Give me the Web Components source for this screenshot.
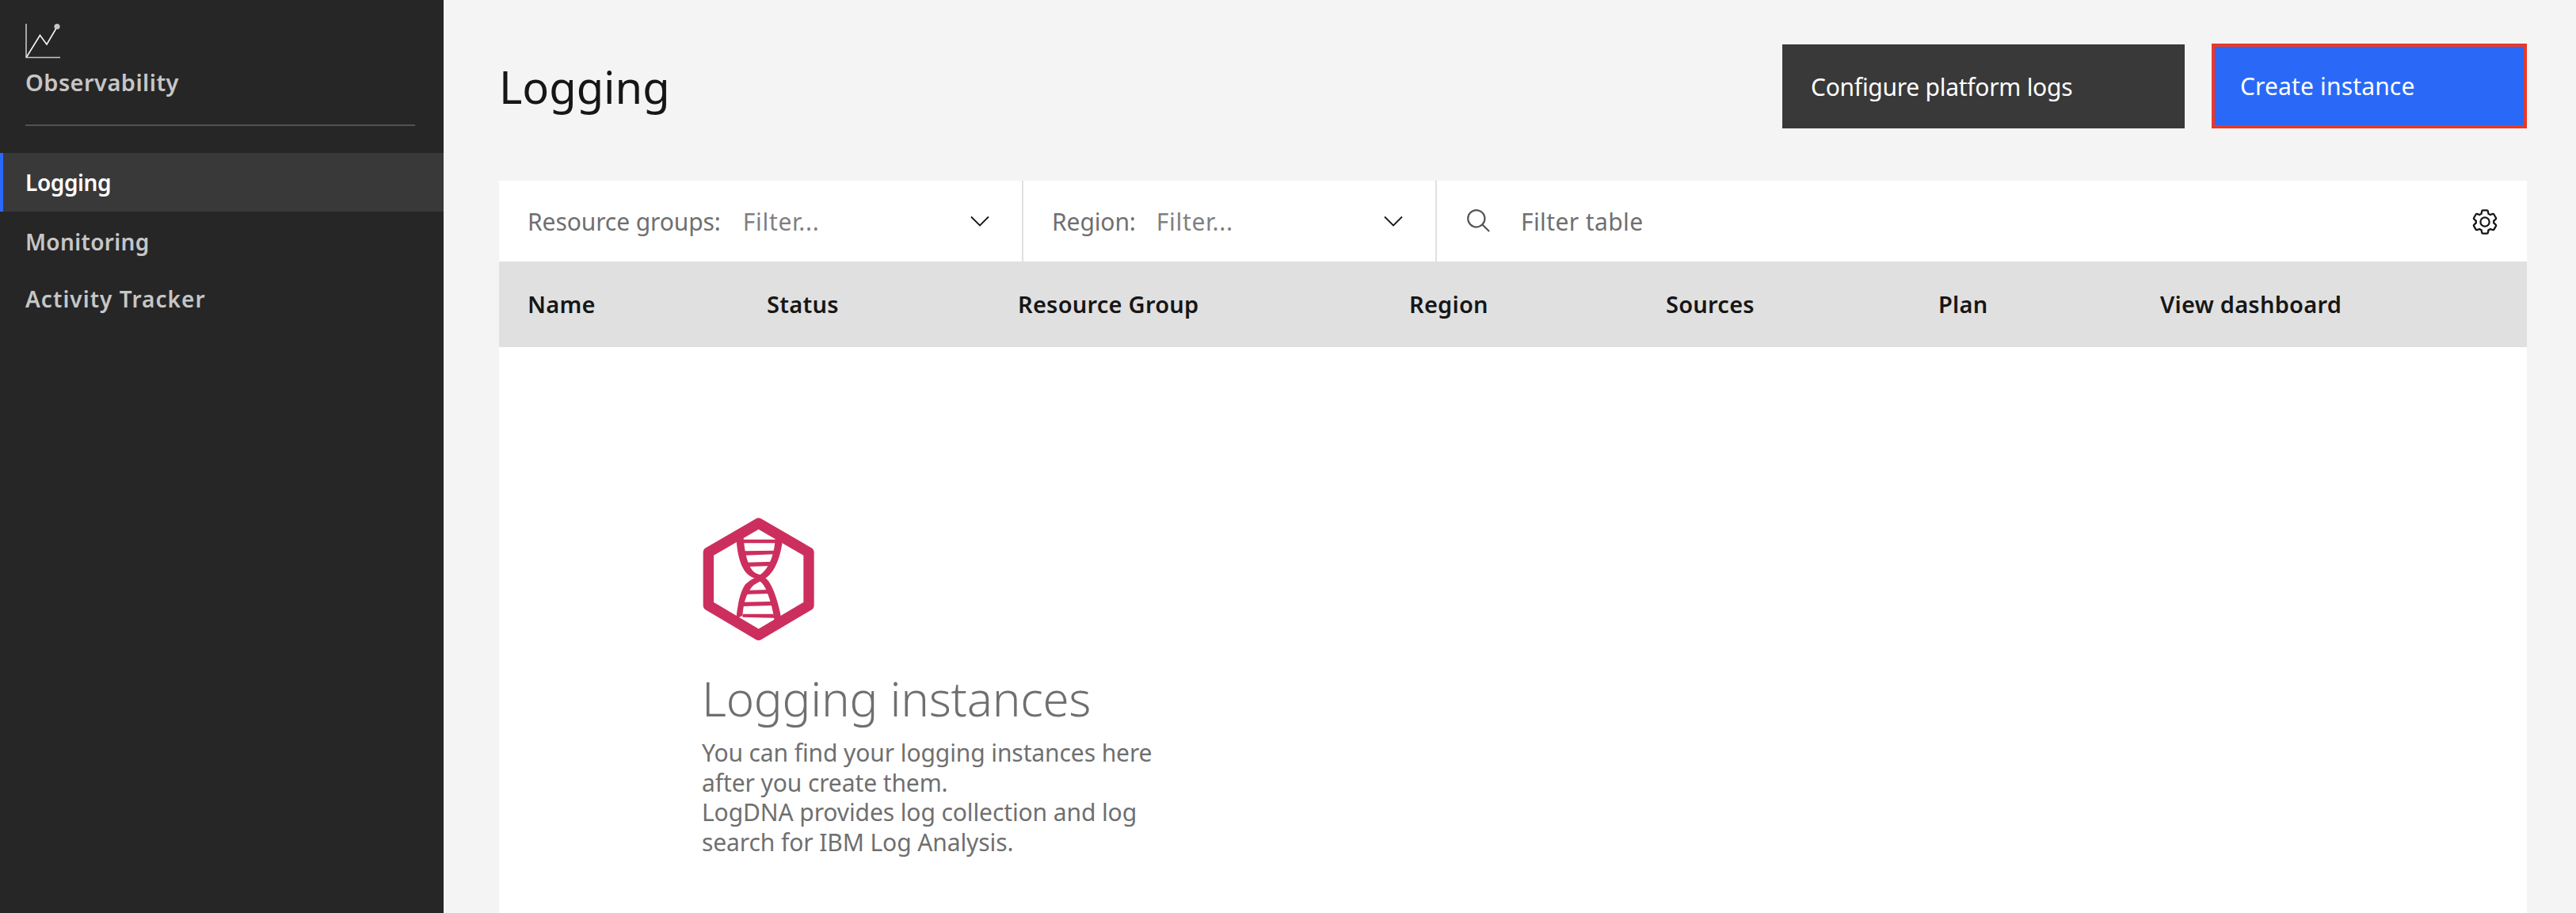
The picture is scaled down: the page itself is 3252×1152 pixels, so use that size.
<!DOCTYPE html>
<html lang="en">
<head>
<meta charset="utf-8">
<title>Logging</title>
<style>
	html, body {
		margin: 0;
		height: 100%;
		background: #f4f4f4;
		font-family: "Noto Sans", "Open Sans", sans-serif;
	}
	body { overflow: hidden; }
</style>
</head>
<body>
	<obs-shell>
		<side-nav slot="nav" heading="Observability">
			<nav-item active style="--ls: -0.4px">Logging</nav-item>
			<nav-item>Monitoring</nav-item>
			<nav-item style="--ls: 1.05px">Activity Tracker</nav-item>
		</side-nav>
		<page-header heading="Logging">
			<action-button style="--ls: -0.27px">Configure platform logs</action-button>
			<action-button kind="primary" style="--ls: 0.15px">Create instance</action-button>
		</page-header>
		<filter-bar>
			<filter-select label="Resource groups:" style="width: 662px"></filter-select>
			<filter-select label="Region:" style="width: 522px" gap="26"></filter-select>
			<table-search></table-search>
		</filter-bar>
		<table-head></table-head>
		<empty-state heading="Logging instances">
			You can find your logging instances here<br>after you create them.<br>LogDNA provides log collection and log<br>search for IBM Log Analysis.
		</empty-state>
	</obs-shell>

<script>
class ObsShell extends HTMLElement {
	constructor() {
		super();
		this.attachShadow({ mode: 'open' });
	}

	connectedCallback() {
		this.shadowRoot.innerHTML = `
			<style>
				:host {
					display: flex;
					height: 100vh;
					overflow: hidden;
				}
				main {
					flex: 1;
					display: flex;
					flex-direction: column;
					padding: 55px 62px 0 70px;
					min-width: 0;
				}
			</style>
			<slot name="nav"></slot>
			<main><slot></slot></main>
		`;
	}
}

class SideNav extends HTMLElement {
	constructor() {
		super();
		this.attachShadow({ mode: 'open' });
	}

	connectedCallback() {
		this.shadowRoot.innerHTML = `
			<style>
				:host {
					display: block;
					width: 560px;
					flex: none;
					background: #262626;
					color: #c6c6c6;
					box-sizing: border-box;
					padding-top: 29px;
				}
				svg { display: block; margin-left: 32px; }
				h2 {
					margin: 11px 0 0 32px;
					font: 600 29px/36px "Noto Sans", sans-serif;
					letter-spacing: 0.45px;
				}
				hr {
					margin: 35px 36px 34px 32px;
					border: 0;
					height: 2px;
					background: #525252;
				}
			</style>
			<svg width="46" height="46" viewBox="32 29 46 46" fill="none">
				<path d="M33 30V72.5H76" stroke="#c6c6c6" stroke-width="1.6"/>
				<path d="M33.5 72L50.5 44.5L59 56L72 34" stroke="#f4f4f4" stroke-width="1.6"/>
				<circle cx="72" cy="33.5" r="3.6" fill="#c6c6c6"/>
			</svg>
			<h2>${this.getAttribute('heading')}</h2>
			<hr>
			<slot></slot>
		`;
	}
}

class NavItem extends HTMLElement {
	constructor() {
		super();
		this.attachShadow({ mode: 'open' });
	}

	connectedCallback() {
		this.shadowRoot.innerHTML = `
			<style>
				:host {
					display: block;
					height: 72px;
					line-height: 72px;
					padding-left: 32px;
					font-size: 28px;
					font-weight: 600;
					letter-spacing: var(--ls, 0.35px);
				}
				:host([active]) {
					height: 74px;
					line-height: 74px;
					margin-bottom: 2px;
					padding-left: 28px;
					border-left: 4px solid #2a69f8;
					background: #393939;
					color: #fff;
				}
			</style>
			<slot></slot>
		`;
	}
}

class PageHeader extends HTMLElement {
	constructor() {
		super();
		this.attachShadow({ mode: 'open' });
	}

	connectedCallback() {
		this.shadowRoot.innerHTML = `
			<style>
				:host {
					display: flex;
					align-items: center;
					gap: 34px;
					height: 107px;
					margin-bottom: 66px;
				}
				h1 {
					flex: 1;
					margin: 0;
					font: 400 56px/76px "Noto Sans", sans-serif;
					color: #161616;
				}
			</style>
			<h1>${this.getAttribute('heading')}</h1>
			<slot></slot>
		`;
	}
}

class ActionButton extends HTMLElement {
	constructor() {
		super();
		this.attachShadow({ mode: 'open' });
	}

	connectedCallback() {
		this.shadowRoot.innerHTML = `
			<style>
				:host {
					display: flex;
					align-items: center;
					box-sizing: border-box;
					width: 508px;
					height: 106px;
					margin-top: 1px;
					padding-left: 36px;
					background: #393939;
					color: #fff;
					font-size: 30px;
					letter-spacing: var(--ls, 0);
				}
				:host([kind="primary"]) {
					width: 398px;
					height: 107px;
					margin-top: 0;
					padding-left: 32px;
					border: 4px solid #e8392a;
					background: #2a69f8;
				}
			</style>
			<slot></slot>
		`;
	}
}

class FilterBar extends HTMLElement {
	constructor() {
		super();
		this.attachShadow({ mode: 'open' });
	}

	connectedCallback() {
		this.shadowRoot.innerHTML = `
			<style>
				:host {
					display: flex;
					height: 102px;
					background: #fff;
				}
			</style>
			<slot></slot>
		`;
	}
}

class FilterSelect extends HTMLElement {
	constructor() {
		super();
		this.attachShadow({ mode: 'open' });
	}

	connectedCallback() {
		const gap = this.getAttribute('gap') || 28;
		this.shadowRoot.innerHTML = `
			<style>
				:host {
					display: flex;
					align-items: center;
					box-sizing: border-box;
					flex: none;
					padding: 0 41px 0 36px;
					border-right: 2px solid #e0e0e0;
					font-size: 30px;
					letter-spacing: -0.1px;
					color: #6f6f6f;
				}
				.ph {
					flex: 1;
					margin-left: ${gap}px;
					letter-spacing: 0.7px;
					color: #7f7f7f;
				}
			</style>
			<span>${this.getAttribute('label')}</span>
			<span class="ph">Filter...</span>
			<svg width="24" height="14" viewBox="0 0 24 14" fill="none">
				<path d="M1 1.5L12 12.5L23 1.5" stroke="#161616" stroke-width="1.8"/>
			</svg>
		`;
	}
}

class TableSearch extends HTMLElement {
	constructor() {
		super();
		this.attachShadow({ mode: 'open' });
	}

	connectedCallback() {
		this.shadowRoot.innerHTML = `
			<style>
				:host {
					flex: 1;
					display: flex;
					align-items: center;
					padding: 0 35px 0 36px;
					font-size: 30px;
					color: #6f6f6f;
				}
				span { flex: 1; margin-left: 36px; letter-spacing: 0.4px; }
				.gear { margin-top: 2px; }
			</style>
			<svg width="34" height="34" viewBox="0 0 32 32" fill="#525252">
				<path d="M29,27.5859l-7.5521-7.5521a11.0177,11.0177,0,1,0-1.4141,1.4141L27.5859,29ZM4,13a9,9,0,1,1,9,9A9.01,9.01,0,0,1,4,13Z"/>
			</svg>
			<span>Filter table</span>
			<svg class="gear" width="36" height="36" viewBox="0 0 32 32" fill="#161616">
				<path d="M27,16.76c0-.25,0-.5,0-.76s0-.51,0-.77l1.92-1.68A2,2,0,0,0,29.3,11L26.94,7a2,2,0,0,0-1.73-1,2,2,0,0,0-.64.1l-2.43.82a11.35,11.35,0,0,0-1.31-.75l-.51-2.52a2,2,0,0,0-2-1.61H13.64a2,2,0,0,0-2,1.61l-.51,2.52a11.48,11.48,0,0,0-1.32.75L7.43,6.06A2,2,0,0,0,6.79,6,2,2,0,0,0,5.06,7L2.7,11a2,2,0,0,0,.41,2.51L5,15.24c0,.25,0,.5,0,.76s0,.51,0,.77L3.11,18.45A2,2,0,0,0,2.7,21L5.06,25a2,2,0,0,0,1.73,1,2,2,0,0,0,.64-.1l2.43-.82a11.35,11.35,0,0,0,1.31.75l.51,2.52a2,2,0,0,0,2,1.61h4.72a2,2,0,0,0,2-1.61l.51-2.52a11.48,11.48,0,0,0,1.32-.75l2.43.82a2,2,0,0,0,.64.1,2,2,0,0,0,1.73-1L29.3,21a2,2,0,0,0-.41-2.51ZM25.21,24l-3.43-1.16a8.86,8.86,0,0,1-2.71,1.57L18.36,28H13.64l-.71-3.55a9.36,9.36,0,0,1-2.7-1.57L6.79,24,4.43,20l2.72-2.4a8.9,8.9,0,0,1,0-3.13L4.43,12,6.79,8l3.43,1.16a8.86,8.86,0,0,1,2.71-1.57L13.64,4h4.72l.71,3.55a9.36,9.36,0,0,1,2.7,1.57L25.21,8,27.57,12l-2.72,2.4a8.9,8.9,0,0,1,0,3.13L27.57,20Z"/>
				<path d="M16,22a6,6,0,1,1,6-6A5.94,5.94,0,0,1,16,22Zm0-10a3.91,3.91,0,0,0-4,4,3.91,3.91,0,0,0,4,4,3.91,3.91,0,0,0,4-4A3.91,3.91,0,0,0,16,12Z"/>
			</svg>
		`;
	}
}

const COLUMNS = ['Name', 'Status', 'Resource Group', 'Region', 'Sources', 'Plan', 'View dashboard'];

class TableHead extends HTMLElement {
	constructor() {
		super();
		this.attachShadow({ mode: 'open' });
	}

	connectedCallback() {
		this.shadowRoot.innerHTML = `
			<style>
				:host {
					display: grid;
					grid-template-columns: 302px 317px 494px 324px 344px 280px 1fr;
					align-items: center;
					height: 108px;
					box-sizing: border-box;
					padding: 0 0 2px 36px;
					background: #e0e0e0;
					color: #161616;
					font-size: 29px;
					font-weight: 600;
					letter-spacing: 0.25px;
				}
			</style>
			${COLUMNS.map((c) => `<span>${c}</span>`).join('')}
		`;
	}
}

class EmptyState extends HTMLElement {
	constructor() {
		super();
		this.attachShadow({ mode: 'open' });
	}

	connectedCallback() {
		this.shadowRoot.innerHTML = `
			<style>
				:host {
					display: block;
					flex: 1;
					box-sizing: border-box;
					padding: 205px 0 0 256px;
					background: #fff;
					color: #6f6f6f;
				}
				svg { display: block; margin: -13px 0 0 -25px; }
				h3 {
					margin: 21px 0 0;
					font: 300 60px/80px "Noto Sans", sans-serif;
					letter-spacing: -0.25px;
				}
				p {
					margin: 10px 0 0;
					font-size: 30px;
					line-height: 37.7px;
					letter-spacing: -0.1px;
				}
			</style>
			<svg width="200" height="190" viewBox="0 0 600 570">
				<path d="M290 91L480 201V401L290 514L100 401V201Z" fill="none" stroke="#cc2f5e" stroke-width="40" stroke-linejoin="round"/>
				<g fill="#cc2f5e">
					<path d="M205 145C210 225 228 280 268 296C295 304 312 322 322 350C335 385 345 420 350 460L376 450C368 410 358 370 342 335C330 308 315 290 285 282C255 272 238 220 232 135Z"/>
					<path d="M355 135C350 205 335 250 305 278C285 295 262 300 240 322C220 350 210 400 205 452L229 440C232 400 240 365 262 335C275 318 295 312 312 302C350 280 375 220 382 145Z"/>
					<path d="M228 152H358V166H232Z"/>
					<path d="M235 196L351 194V208L239 212Z"/>
					<path d="M243 239L340 236V252L250 255Z"/>
					<path d="M240 345L326 342L331 357L236 360Z"/>
					<path d="M234 389L336 387L340 402L232 405Z"/>
					<path d="M230 434H346L350 449L229 446Z"/>
				</g>
			</svg>
			<h3>${this.getAttribute('heading')}</h3>
			<p><slot></slot></p>
		`;
	}
}

customElements.define('obs-shell', ObsShell);
customElements.define('side-nav', SideNav);
customElements.define('nav-item', NavItem);
customElements.define('page-header', PageHeader);
customElements.define('action-button', ActionButton);
customElements.define('filter-bar', FilterBar);
customElements.define('filter-select', FilterSelect);
customElements.define('table-search', TableSearch);
customElements.define('table-head', TableHead);
customElements.define('empty-state', EmptyState);
</script>
</body>
</html>
